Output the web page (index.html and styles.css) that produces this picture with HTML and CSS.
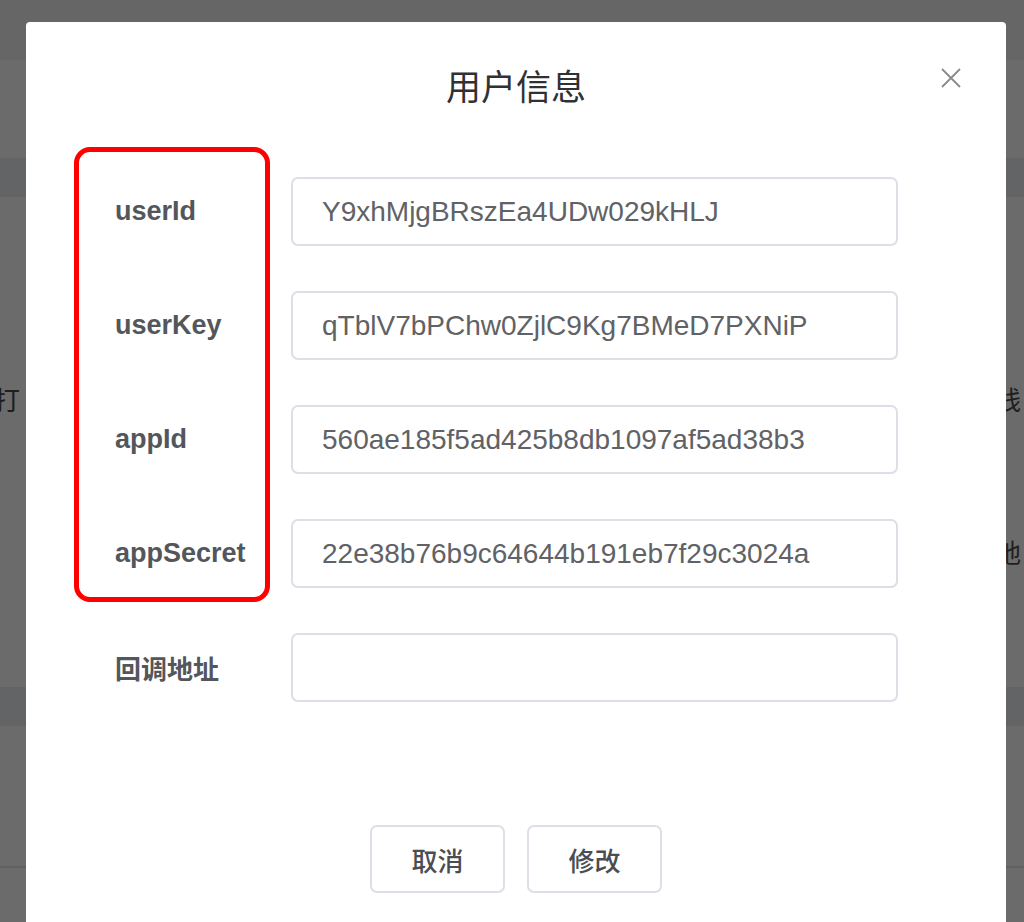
FILE: index.html
```html
<!DOCTYPE html>
<html lang="zh">
<head>
<meta charset="utf-8">
<title>用户信息</title>
<link rel="stylesheet" href="styles.css">
</head>
<body>
<div class="page">
  <div class="band band-top"></div>
  <div class="band band-light h98"></div>
  <div class="band band-dark h39"></div>
  <div class="band band-light content-area">
    <div class="bg-row row-a"><span class="bg-char left">打</span><span class="bg-char right">线</span></div>
    <div class="bg-row row-b"><span></span><span class="bg-char right">地</span></div>
  </div>
  <div class="band band-dark h39"></div>
  <div class="band band-light h140"></div>
  <div class="band band-line"></div>
  <div class="band band-light h60"></div>
</div>

<div class="modal">
  <div class="modal-header">
    <h2 class="modal-title">用户信息</h2>
    <button class="close" aria-label="close">
      <svg viewBox="0 0 20 20" width="20" height="20"><path d="M1 1 L19 19 M19 1 L1 19" stroke="#8a8a8a" stroke-width="1.8" fill="none"/></svg>
    </button>
  </div>
  <form class="form">
    <div class="row"><label class="label">userId</label><input class="input" value="Y9xhMjgBRszEa4UDw029kHLJ"></div>
    <div class="row"><label class="label">userKey</label><input class="input" value="qTblV7bPChw0ZjlC9Kg7BMeD7PXNiP"></div>
    <div class="row"><label class="label">appId</label><input class="input" value="560ae185f5ad425b8db1097af5ad38b3"></div>
    <div class="row"><label class="label">appSecret</label><input class="input" value="22e38b76b9c64644b191eb7f29c3024a"></div>
    <div class="row"><label class="label cjk">回调地址</label><input class="input" value=""></div>
  </form>
  <div class="footer">
    <button class="btn">取消</button>
    <button class="btn">修改</button>
  </div>
  <div class="highlight"></div>
</div>
</body>
</html>
```

FILE: styles.css
```css
* { box-sizing: border-box; }
html, body { margin: 0; padding: 0; }
body {
  width: 1024px;
  height: 922px;
  overflow: hidden;
  background: #6b6b6b;
  font-family: "Liberation Sans", "Noto Sans CJK SC", sans-serif;
}
.page { display: flex; flex-direction: column; }
.band { width: 100%; }
.band-top { height: 60px; background: #666666; }
.band-light { background: #6b6b6b; }
.band-dark { background: #636466; }
.h98 { height: 98px; }
.h39 { height: 39px; }
.h140 { height: 140px; }
.h60 { height: 60px; }
.band-line { height: 2px; background: #616161; }
.content-area { height: 490px; display: flex; flex-direction: column; padding-top: 187px; }
.bg-row { display: flex; justify-content: space-between; align-items: center; height: 30px; }
.row-b { margin-top: 123px; }
.bg-char {
  font-family: "Noto Sans CJK SC", sans-serif;
  font-size: 26px;
  line-height: 30px;
  color: #1e1e1e;
}
.bg-char.left { margin-left: -6px; }
.bg-char.right { margin-right: 3px; }

.modal {
  position: absolute;
  left: 26px;
  top: 22px;
  width: 980px;
  height: 920px;
  background: #ffffff;
  border-radius: 4px;
}
.modal-header { position: relative; padding-top: 40px; text-align: center; }
.modal-title {
  margin: 0;
  font-family: "Noto Sans CJK SC", sans-serif;
  font-weight: 400;
  font-size: 35px;
  line-height: 46px;
  color: #303133;
}
.close {
  position: absolute;
  right: 45px;
  top: 46px;
  width: 20px;
  height: 20px;
  padding: 0;
  border: 0;
  background: transparent;
  display: flex;
}
.form {
  margin: 69px 0 0 89px;
  display: flex;
  flex-direction: column;
  gap: 45px;
}
.row { display: flex; align-items: center; height: 69px; }
.label {
  width: 176px;
  flex: none;
  font-size: 27px;
  font-weight: 700;
  color: #53575c;
}
.label.cjk { font-family: "Noto Sans CJK SC", sans-serif; font-size: 26px; }
.input {
  width: 607px;
  height: 69px;
  border: 2px solid #dcdfe6;
  border-radius: 7px;
  padding: 0 0 0 29px;
  font-family: "Liberation Sans", sans-serif;
  font-size: 28px;
  color: #606266;
  background: #fff;
  outline: none;
}
.footer {
  display: flex;
  justify-content: center;
  gap: 22px;
  margin-top: 123px;
}
.btn {
  width: 135px;
  height: 68px;
  border: 2px solid #dcdfe6;
  border-radius: 7px;
  background: #fff;
  font-family: "Noto Sans CJK SC", sans-serif;
  font-size: 26px;
  font-weight: 500;
  color: #4a4d52;
  padding: 0;
}
.highlight {
  position: absolute;
  left: 48px;
  top: 125px;
  width: 196px;
  height: 455px;
  border: 5px solid #ff0000;
  border-radius: 16px;
  pointer-events: none;
}
```
